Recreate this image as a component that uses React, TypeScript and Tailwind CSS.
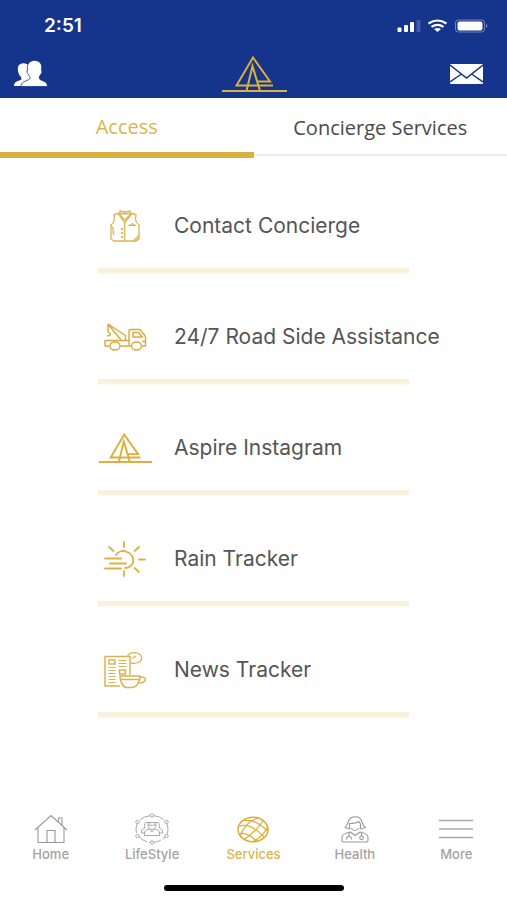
import type { ReactNode } from "react";

function Logo({ className, small }: { className: string; small?: boolean }) {
  return (
    <svg className={className} viewBox="0 0 66 38" fill="none" stroke="#dcb03f" strokeWidth={small ? 2.4 : 2} aria-hidden="true">
      <path d="M52 30.500 H15.500 L32 2.500 L49 26.500 H36" />
      <path d="M25.500 36 L31.500 11 L39 36" />
      <path d="M1 36 H66" />
    </svg>
  );
}

function PeopleIcon() {
  return (
    <svg className="h-7 w-[34px]" viewBox="0 0 34 28" aria-hidden="true">
      <path
        fill="#fff"
        d="M0 26 C0 22 3 21.500 6.500 20 C8 19 7.500 17.500 6 16 C4 13 3.500 10 4 7 C5 3.500 9 2.500 13 4 L21 10 L17 26 Z"
      />
      <path
        fill="#fff"
        stroke="#15348c"
        strokeWidth=".8"
        d="M7 26.500 C7 22 11 21.500 15 19.500 C17 18 15.500 16.500 14.500 14.500 C13 13.500 12.500 11 13.500 10 C12.500 4 15.500 .5 20.500 .5 C26 .5 28.500 4 27.500 10 C28.500 11 28 13.500 26.500 14.500 C25.500 16.500 24.500 18 26 19.500 C30 21.500 33.500 22 33.500 26.500 Z"
      />
    </svg>
  );
}

function MailIcon() {
  return (
    <svg className="h-5 w-[33px]" viewBox="0 0 33 20" aria-hidden="true">
      <rect width="33" height="20" rx="1" fill="#fff" />
      <path d="M0 1 L16.500 14 L33 1 M0 18 L11.500 10 M33 18 L21.500 10" fill="none" stroke="#15348c" strokeWidth="1.500" />
    </svg>
  );
}

function StatusIcons() {
  return (
    <svg className="h-[14px] w-[92px]" viewBox="0 0 92 14" aria-hidden="true">
      <g fill="#fff">
        <rect x="0.500" y="8.500" width="4" height="4.500" rx="1" />
        <rect x="7" y="6" width="4" height="7" rx="1" />
        <rect x="13" y="3" width="4" height="10" rx="1" />
        <rect x="19.500" y="1" width="4" height="12" rx="1" opacity=".2" />
        <path d="M37 10 Q40.500 7.800 44 10 L40.500 13 Z" />
      </g>
      <path d="M31.500 4.500 Q40.500 -1.500 49.500 4.500 M34.500 7.800 Q40.500 3.800 46.500 7.800" fill="none" stroke="#fff" strokeWidth="2.200" />
      <rect x="58.500" y="1" width="29" height="12" rx="3" fill="none" stroke="#fff" strokeOpacity=".4" />
      <rect x="60.500" y="2.500" width="25" height="9" rx="2" fill="#fff" />
      <path d="M89 5 Q91.500 7 89 9 Z" fill="#fff" opacity=".5" />
    </svg>
  );
}

function VestIcon() {
  return (
    <svg className="h-8 w-[30px]" viewBox="0 0 30 32" fill="none" stroke="#dcb558" strokeWidth="1.300" aria-hidden="true">
      <path d="M10 3 L4 4.500 C5 9 4 13 1 15 V29 L4 31 H14.700 V13 L8.500 4" />
      <path d="M20 3 L26 4.500 C25 9 26 13 29 15 V29 L26 31 H14.700 M14.700 13 L21.500 4" />
      <path d="M10 1 L15 2 L20 1 V4 L15 3.500 L10 4 Z M10 5 L14.700 10 L20 5" />
      <path d="M1 16 Q4 18 3 22 L4 25" />
      <path d="M22.500 31 L29 25 V29 L26 31 Z M18.500 15.500 H26 L22.500 13.500 Z" fill="#e6c883" strokeWidth=".9" />
      <path d="M11 19 h2 M11 23 h2 M11 27 h2" strokeWidth="1.800" />
    </svg>
  );
}

function TowTruckIcon() {
  return (
    <svg className="h-7 w-[43px]" viewBox="0 0 43 28" fill="none" stroke="#dba93c" strokeWidth="1.400" strokeLinejoin="round" aria-hidden="true">
      <path d="M5.500 23 H1 V17.500 H25 V8 Q25 6.500 27 6.500 H36 L41.500 13.500 V23 H38 M27 23 H16.500" />
      <path d="M25 22.500 V17 M29 14 V9.500 H34.500 L38.500 14 Z M38 18.500 H41" />
      <path d="M4 1 L21.500 12.500 V17 M4 1 L17 17 M4 1 V9 M4 9 L6.500 11 Q6 13.500 3 12.500" />
      <ellipse cx="11" cy="23" rx="5" ry="4" fill="#fff" />
      <ellipse cx="32.500" cy="23" rx="5" ry="4" fill="#fff" />
    </svg>
  );
}

function SunIcon() {
  return (
    <svg className="h-9 w-[42px]" viewBox="0 0 42 36" fill="none" stroke="#dfaf42" strokeWidth="1.800" strokeLinecap="round" aria-hidden="true">
      <path d="M20 1 V6 M5 6 L9.500 10 M35 6 L30.500 10 M35 18.500 H41 M30.500 27 L35 31 M20 30 V35" />
      <path d="M12 14 C14 10 19 9 23 11 C29 13 31 20 27.500 24 C26 26 24 27 21 27" />
      <path d="M1 17.500 H17 M6 22.500 H22 M1 27.500 H17" />
    </svg>
  );
}

function NewsIcon() {
  return (
    <svg className="h-[38px] w-[42px]" viewBox="0 0 42 38" fill="none" stroke="#dcb34e" strokeWidth="1.500" aria-hidden="true">
      <path d="M16 35 H1 V5.500 H26 V24" />
      <rect x="5" y="9" width="6" height="4" />
      <rect x="15.500" y="19" width="6" height="4" />
      <path d="M14.500 9.500 h8 M14.500 12.500 h8 M14.500 15.500 h8 M4.500 16.500 h7 M4.500 19.500 h7 M4.500 22.500 h7 M4.500 25.500 h7 M4.500 28.500 h7 M4.500 31.500 h7" strokeWidth="1.100" />
      <path d="M23.500 5 C26 0 36 .5 37.500 6 C38.500 10 33 13.500 27 12 M28 7.500 L32 5" strokeWidth="1.300" />
      <path d="M16 25 H36 C36 32 32 36.500 28 36.500 H23 C19 36.500 16 31 16 25 Z M17 28.500 H35" fill="#fff" />
      <path d="M36 26.500 C40 25 42 27 41 29.500 C40 32 37 32 35 32" />
    </svg>
  );
}

function HomeIcon() {
  return (
    <svg className="h-[30px] w-[34px]" viewBox="0 0 34 30" fill="none" stroke="#999" strokeWidth="1.100" aria-hidden="true">
      <path d="M1 16 L17 1.500 L33 16 M4 13.500 V28.500 H30 V13.500 M13 28.500 V16.500 H21 V28.500 M24.500 8 V4 H28 V11.500" />
    </svg>
  );
}

function LifestyleIcon() {
  return (
    <svg className="h-8 w-9" viewBox="0 0 36 32" fill="none" stroke="#aaa" strokeWidth="1" aria-hidden="true">
      <ellipse cx="18" cy="16" rx="16" ry="13.500" strokeDasharray="12 2" />
      <g fill="#fff">
        <circle cx="18" cy="2.500" r="1.700" />
        <circle cx="18" cy="29.500" r="1.700" />
        <circle cx="3.500" cy="9" r="1.700" />
        <circle cx="32.500" cy="9" r="1.700" />
        <circle cx="3.500" cy="23" r="1.700" />
        <circle cx="32.500" cy="23" r="1.700" />
        <path d="M7.500 20 Q7 15.500 11 15 Q9 9 14 9.500 H22 Q27 9 25 15 Q29 15.500 28.500 20 Z" />
        <path d="M10.500 22.500 V19 Q11 16.500 15.500 16 L18 19 L20.500 16 Q25 16.500 25.500 19 V22.500 Z" />
        <path d="M14 11 Q14 9.500 18 9.500 Q22 9.500 22 11 Q22 16 18 16.500 Q14 16 14 11 Z M14 12 Q19 13 22 11.500" />
      </g>
    </svg>
  );
}

function GlobeIcon() {
  return (
    <svg className="h-[27px] w-8" viewBox="0 0 32 27" fill="none" stroke="#dcae35" strokeWidth="1.200" aria-hidden="true">
      <ellipse cx="16" cy="13.500" rx="15" ry="12.300" strokeWidth="1.500" />
      <path d="M3.500 20 Q8 6 21 2 M7 23.500 Q19 16 26.500 4 M15 26 Q26 21 30.500 11" />
      <path d="M7 4.500 Q19 3 30 15 M2 10 Q15 7 27 21 M2.500 17.500 Q11 16 20 25.500" />
    </svg>
  );
}

function HealthIcon() {
  return (
    <svg className="h-[27px] w-7" viewBox="0 0 28 27" fill="none" stroke="#999" strokeWidth="1.100" strokeLinejoin="round" aria-hidden="true">
      <path d="M9 13 L4 11.500 Q7 8 8 4 Q10 .8 14 .8 Q20 .8 21 6 Q22 10 24.500 11.500 L19.500 13" />
      <path d="M8.500 13 V7.500 Q15 7.500 18 5.500 L19.500 8 V13 M10 12 Q14 17.500 18 12" />
      <path d="M2.500 26 Q1 26 1 24.500 V21 Q1.500 17.500 9.500 16 L14 19.500 L19 16 Q26.500 17.500 27 21 V24.500 Q27 26 25.500 26 Z" />
      <path d="M8 16.500 V20 M5.500 23.500 V22 Q8 18.500 10.500 22 V23.500 M20.500 16.500 V20" />
      <circle cx="20.500" cy="21.800" r="1.800" />
    </svg>
  );
}

function MoreIcon() {
  return (
    <svg className="h-5 w-[34px]" viewBox="0 0 34 20" fill="none" stroke="#aaa" strokeWidth="1.300" aria-hidden="true">
      <path d="M0 1.500 H34 M0 10 H34 M0 18.500 H34" />
    </svg>
  );
}

const services: { label: string; icon: ReactNode }[] = [
  { label: "Contact Concierge", icon: <VestIcon /> },
  { label: "24/7 Road Side Assistance", icon: <TowTruckIcon /> },
  { label: "Aspire Instagram", icon: <Logo className="h-8 w-[54px]" small /> },
  { label: "Rain Tracker", icon: <SunIcon /> },
  { label: "News Tracker", icon: <NewsIcon /> },
];

const navItems: { label: string; icon: ReactNode; active?: boolean }[] = [
  { label: "Home", icon: <HomeIcon /> },
  { label: "LifeStyle", icon: <LifestyleIcon /> },
  { label: "Services", icon: <GlobeIcon />, active: true },
  { label: "Health", icon: <HealthIcon /> },
  { label: "More", icon: <MoreIcon /> },
];

export default function App() {
  return (
    <div className="flex min-h-screen flex-col bg-white font-['Inter',sans-serif]">
      <header className="bg-[#15348c] text-white">
        <div className="flex h-[50px] items-center justify-between pt-[2px] pr-[18px] pl-11">
          <span className="text-[19px] font-semibold">2:51</span>
          <StatusIcons />
        </div>
        <div className="grid h-12 grid-cols-[1fr_auto_1fr] items-center px-[14px]">
          <button type="button" aria-label="Contacts" className="justify-self-start">
            <PeopleIcon />
          </button>
          <Logo className="h-[38px] w-[66px]" />
          <button type="button" aria-label="Messages" className="mr-[10px] justify-self-end">
            <MailIcon />
          </button>
        </div>
      </header>

      <div role="tablist" className="grid h-[60px] grid-cols-2 font-['Open_Sans',sans-serif] text-xl">
        <button type="button" role="tab" aria-selected="true" className="border-b-[6px] border-[#d9b03f] pt-1 text-[#dcb44c]">
          Access
        </button>
        <button type="button" role="tab" aria-selected="false" className="mb-[2px] border-b-2 border-[#eeeeee] pt-1 text-[#4a4a4a]">
          Concierge Services
        </button>
      </div>

      <main className="px-[98px] pt-1">
        <ul>
          {services.map((service) => (
            <li key={service.label} className="h-[111px] border-b-[5px] border-[#faf1dc] shadow-[0_1px_2px_#fdf8ec]">
              <button type="button" className="flex h-full w-full items-center gap-[22px] pt-[22px] text-left">
                <span className="flex w-[54px] shrink-0 justify-center">{service.icon}</span>
                <span className="text-[21px] whitespace-nowrap text-[#555555]">{service.label}</span>
              </button>
            </li>
          ))}
        </ul>
      </main>

      <footer className="mt-auto">
        <nav className="grid grid-cols-5">
          {navItems.map((item) => (
            <a
              key={item.label}
              href="#"
              aria-current={item.active ? "page" : undefined}
              className={`flex flex-col items-center text-[13px] font-medium ${item.active ? "text-[#dcb44c]" : "text-[#a3a3a3]"}`}
            >
              <span className="flex h-8 items-center">{item.icon}</span>
              <span className="leading-[18px]">{item.label}</span>
            </a>
          ))}
        </nav>
        <div className="mx-auto mt-[22px] mb-[9px] h-[6px] w-[180px] rounded-full bg-black" />
      </footer>
    </div>
  );
}
